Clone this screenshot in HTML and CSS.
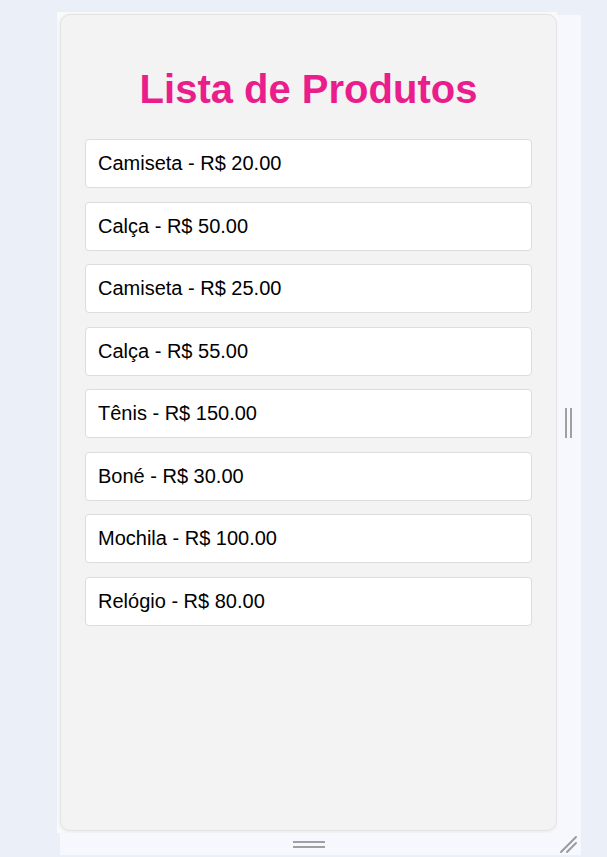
FILE: index.html
```html
<!DOCTYPE html>
<html lang="pt-BR">
<head>
<meta charset="utf-8">
<title>Lista de Produtos</title>
<link rel="stylesheet" href="styles.css">
</head>
<body>
<div class="stage">
  <div class="preview">
    <div class="frame">
      <div class="card">
        <h1 class="title">Lista de Produtos</h1>
        <ul class="list">
          <li class="item">Camiseta - R$ 20.00</li>
          <li class="item">Calça - R$ 50.00</li>
          <li class="item">Camiseta - R$ 25.00</li>
          <li class="item">Calça - R$ 55.00</li>
          <li class="item">Tênis - R$ 150.00</li>
          <li class="item">Boné - R$ 30.00</li>
          <li class="item">Mochila - R$ 100.00</li>
          <li class="item">Relógio - R$ 80.00</li>
        </ul>
      </div>
    </div>
    <div class="vbar"><span class="vgrip"></span></div>
    <div class="hbar"><span class="hgrip"></span></div>
    <div class="corner">
      <svg width="24" height="22" viewBox="0 0 24 22">
        <line x1="4" y1="19" x2="19" y2="4" stroke="#9a9a9a" stroke-width="2" stroke-linecap="round"/>
        <line x1="10" y1="19" x2="19" y2="10" stroke="#9a9a9a" stroke-width="2" stroke-linecap="round"/>
      </svg>
    </div>
  </div>
</div>
</body>
</html>
```

FILE: styles.css
```css
html, body {
  margin: 0;
  padding: 0;
}
body {
  background: #ebeff8;
  font-family: "Liberation Sans", Arial, sans-serif;
}
.stage {
  padding: 12px 0 0 57px;
}
.preview {
  display: grid;
  grid-template-columns: 500px 24px;
  grid-template-rows: 821px 22px;
}
.frame {
  grid-column: 1;
  grid-row: 1;
  background: #fafafa;
  padding: 2px 0 0 3px;
  box-sizing: border-box;
}
.card {
  box-sizing: border-box;
  width: 497px;
  height: 817px;
  background: #f3f3f3;
  border: 1px solid #e3e3e3;
  border-radius: 10px;
  box-shadow: 0 1px 4px rgba(0, 0, 0, 0.08);
  padding: 24px;
}
.title {
  margin: 27px 0 27px;
  font-size: 40px;
  font-weight: bold;
  text-align: center;
  color: #e91e8c;
  line-height: 46px;
}
.list {
  list-style: none;
  margin: 0;
  padding: 0;
  display: flex;
  flex-direction: column;
  gap: 13.5px;
}
.item {
  background: #fff;
  border: 1px solid #dcdcdc;
  border-radius: 4px;
  padding: 12px 12px;
  font-size: 20px;
  line-height: 23px;
  color: #000;
}
.vbar {
  grid-column: 2;
  grid-row: 1;
  margin-top: 3px;
  background: #f6f8fd;
  display: flex;
  align-items: center;
  justify-content: center;
}
.vgrip {
  width: 3px;
  height: 30px;
  border-left: 2px solid #a0a0a0;
  border-right: 2px solid #a0a0a0;
  margin-left: -2px;
  margin-top: -2px;
}
.hbar {
  grid-column: 1;
  grid-row: 2;
  margin-left: 3px;
  background: #f7f8fd;
  display: flex;
  justify-content: center;
  padding-top: 8px;
  box-sizing: border-box;
}
.hgrip {
  width: 32px;
  height: 3px;
  border-top: 2px solid #a0a0a0;
  border-bottom: 2px solid #a0a0a0;
}
.corner {
  grid-column: 2;
  grid-row: 2;
  background: #f6f8fd;
  line-height: 0;
}
```
